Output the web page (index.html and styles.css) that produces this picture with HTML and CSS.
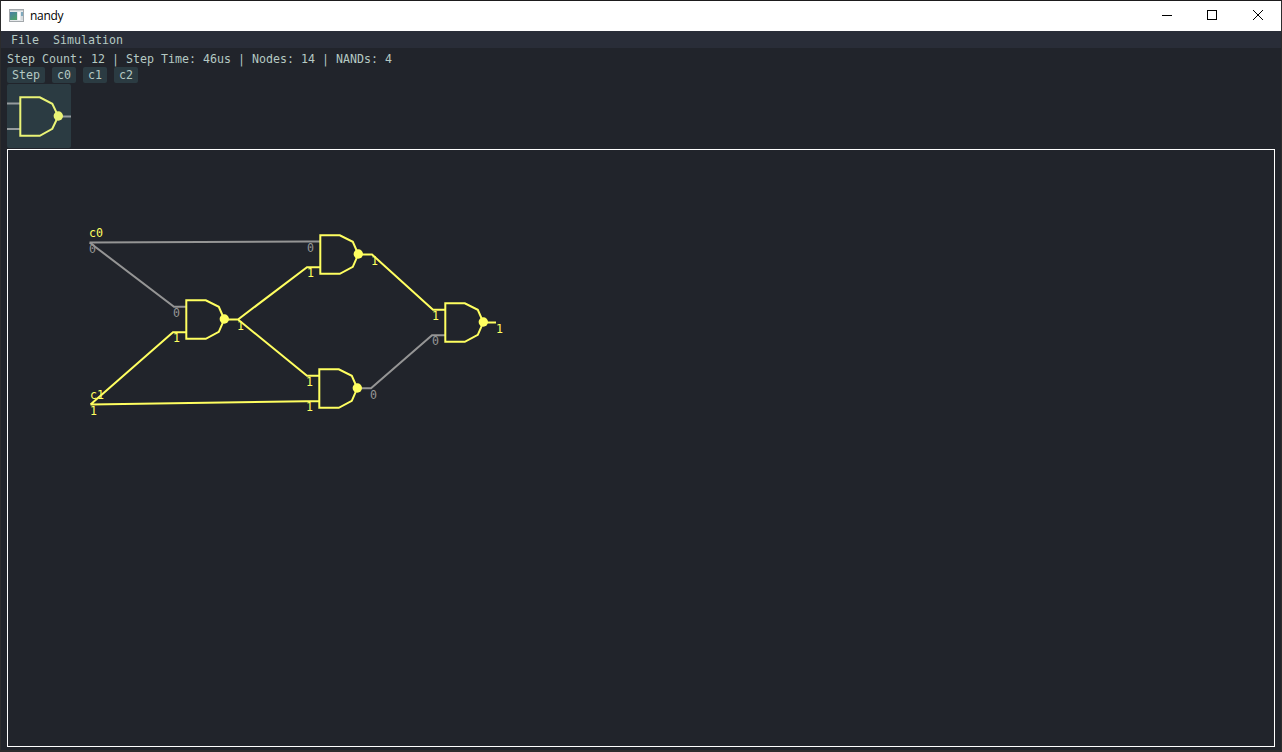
FILE: index.html
```html
<!DOCTYPE html>
<html lang="en">
<head>
<meta charset="utf-8">
<title>nandy</title>
<link rel="stylesheet" href="styles.css">
</head>
<body>
<div class="window">
  <header class="titlebar">
    <svg class="app-icon" width="16" height="14" viewBox="0 0 16 14">
      <defs>
        <linearGradient id="screen" x1="0" y1="0" x2="0.6" y2="1">
          <stop offset="0" stop-color="#4a7fa8"/>
          <stop offset="1" stop-color="#4fa06c"/>
        </linearGradient>
      </defs>
      <rect x="0.5" y="0.5" width="14" height="12" fill="#e6e9eb" stroke="#a3a8ac"/>
      <rect x="1" y="1" width="13" height="1" fill="#c9cdd0"/>
      <rect x="1" y="3" width="7" height="8" fill="url(#screen)"/>
      <rect x="9" y="3" width="2" height="8" fill="#fff"/>
      <rect x="12" y="3" width="2" height="4" fill="#7fa9bd"/>
      <rect x="12" y="7" width="2" height="4" fill="#d5dadd"/>
    </svg>
    <span class="title">nandy</span>
    <div class="controls">
      <svg width="46" height="30" viewBox="0 0 46 30"><path d="M17 14.5h10" class="control"/></svg>
      <svg width="46" height="30" viewBox="0 0 46 30"><rect x="16.500" y="9.500" width="9" height="9" class="control"/></svg>
      <svg width="46" height="30" viewBox="0 0 46 30"><path d="M16 9l10 10M26 9l-10 10" class="control"/></svg>
    </div>
  </header>
  <nav class="menubar"><span>File</span><span>Simulation</span></nav>
  <main class="content">
    <div class="stats">Step Count: 12 | Step Time: 46us | Nodes: 14 | NANDs: 4</div>
    <div class="buttons">
      <button>Step</button><button>c0</button><button>c1</button><button>c2</button>
    </div>
    <div class="palette">
      <svg width="64" height="64" viewBox="0 0 64 64">
        <path class="pin" d="M0 19.500H13M0 45H13M51 32.500H64"/>
        <g class="palette-gate" transform="translate(13.300 13.300)">
          <path d="M0 0H19.500L32 6.500L38 19L32 31.500L19.500 38.500H0Z"/>
          <circle cx="38" cy="18.700" r="4.700"/>
        </g>
      </svg>
    </div>
    <div class="canvas">
      <svg width="1266" height="596" viewBox="8 150 1266 596">
        <defs>
          <g id="nand">
            <path class="gate-body" d="M0 0H19.500L32.500 6.500L38 19L32.500 31.500L19.500 38.500H0Z"/>
            <circle class="gate-dot" cx="38" cy="18.700" r="4.700"/>
          </g>
        </defs>
        <g class="low">
          <path d="M89.500 242.500L307 241.500H320M89.500 242.500L174 306.700H186M358 388.300H371L432 335.200H445"/>
        </g>
        <g class="high">
          <path d="M90.500 404.500L173 332.200H186M90.500 404.500L306 401.200H319M224 319.500H238L307 267.200H320M238 319.500L307 375.800H319M358 254.500H372L433 309.700H445M483 322.500H496"/>
          <use href="#nand" x="186.300" y="300.300"/>
          <use href="#nand" x="320.300" y="235.300"/>
          <use href="#nand" x="319.300" y="369.300"/>
          <use href="#nand" x="445.300" y="303.300"/>
        </g>
        <g class="low-text">
          <text x="89" y="253">0</text><text x="173" y="317">0</text>
          <text x="307" y="252">0</text><text x="370" y="399">0</text>
          <text x="432" y="345">0</text>
        </g>
        <g class="high-text">
          <text x="89" y="237">c0</text><text x="90" y="399">c1</text>
          <text x="90" y="415">1</text><text x="173" y="342">1</text>
          <text x="237" y="330">1</text><text x="307" y="277">1</text>
          <text x="306" y="386">1</text><text x="306" y="411">1</text>
          <text x="371" y="265">1</text><text x="432" y="320">1</text>
          <text x="496" y="333">1</text>
        </g>
      </svg>
    </div>
  </main>
</div>
</body>
</html>
```
FILE: styles.css
```css
* { box-sizing: border-box; }
body {
  margin: 0;
  overflow: hidden;
  background: #21242b;
}
.window {
  width: 1282px;
  height: 752px;
  display: flex;
  flex-direction: column;
  border: 1px solid #2c2c2d;
  border-top-color: #1d1b1d;
  border-bottom-width: 2px;
  background: #21242b;
  color: #b5c9c3;
  font: 11.630px/17px "DejaVu Sans Mono", monospace;
}
.titlebar {
  flex: none;
  height: 30px;
  display: flex;
  align-items: center;
  padding-left: 8px;
  background: #fff;
  color: #000;
  font: 12px/16px "Open Sans", "Noto Sans", sans-serif;
}
.app-icon { margin-top: -1px; }
.title { margin-left: 5px; letter-spacing: -0.300px; }
.controls { display: flex; margin-left: auto; margin-right: -2px; }
.control { fill: none; stroke: #000; stroke-width: 1; }
.menubar {
  flex: none;
  height: 17px;
  display: flex;
  gap: 14px;
  padding: 1px 0 0 10px;
  background: #292d38;
}
.content {
  flex: 1;
  display: flex;
  flex-direction: column;
  padding: 3px 6px 3px;
}
.stats { height: 16px; white-space: pre; }
.buttons { display: flex; gap: 7px; height: 16px; }
.buttons button {
  height: 16px;
  padding: 0 5px;
  border: 0;
  border-radius: 2px;
  background: #2b3b42;
  color: inherit;
  font: inherit;
  line-height: 16px;
}
.palette {
  width: 64px;
  height: 64px;
  margin: 1px 0;
  border-radius: 2px;
  background: #2b3b42;
}
.palette svg, .canvas svg { display: block; }
.canvas { flex: 1; border: 1px solid #fff; overflow: hidden; }
.pin { stroke: #959b9e; stroke-width: 2; }
.palette-gate path { fill: none; stroke: #eaf476; stroke-width: 2; }
.palette-gate circle { fill: #eaf476; }
.low path { fill: none; stroke: #959595; stroke-width: 2; }
.high > path, .gate-body { fill: none; stroke: #ffff60; stroke-width: 2; }
.gate-dot { fill: #ffff60; }
.low-text { fill: #959595; }
.high-text { fill: #ffff60; }
```
